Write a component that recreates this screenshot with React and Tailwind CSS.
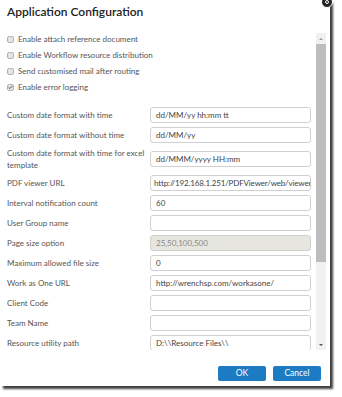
import { Check } from "lucide-react";

const checks = [
  { label: "Enable attach reference document", checked: false },
  { label: "Enable Workflow resource distribution", checked: false },
  { label: "Send customised mail after routing", checked: false },
  { label: "Enable error logging", checked: true },
];

const fields = [
  { label: "Custom date format with time", value: "dd/MM/yy hh:mm tt" },
  { label: "Custom date format without time", value: "dd/MM/yy" },
  { label: "Custom date format with time for excel template", value: "dd/MMM/yyyy HH:mm", tall: true },
  { label: "PDF viewer URL", value: "http://192.168.1.251/PDFViewer/web/viewer", tight: true },
  { label: "Interval notification count", value: "60" },
  { label: "User Group name", value: "" },
  { label: "Page size option", value: "25,50,100,500", disabled: true },
  { label: "Maximum allowed file size", value: "0" },
  { label: "Work as One URL", value: "http://wrenchsp.com/workasone/" },
  { label: "Client Code", value: "" },
  { label: "Team Name", value: "" },
  { label: "Resource utility path", value: "D:\\\\Resource Files\\\\" },
];

export default function App() {
  return (
    <div className="w-[342px] h-[397px] bg-white overflow-hidden relative font-['Lato',sans-serif]">
      {/* Dialog */}
      <div className="w-[330px] h-[386px] bg-white shadow-[3px_3px_2px_rgba(0,0,0,0.75)] flex flex-col">

        {/* Header */}
        <h1 className="pt-[2px] pl-[7px] text-[12px] leading-[20px] font-semibold text-[#222]">
          Application Configuration
        </h1>

        {/* Scrollable body */}
        <div className="mt-[9px] h-[319px] flex">
          <div className="w-[316px] overflow-hidden pl-[7px]">

            {/* Checkboxes */}
            <div className="flex flex-col">
              {checks.map((c) => (
                <div key={c.label} className="h-[16px] flex items-center gap-[4px]">
                  <div className="w-[7px] h-[7px] rounded-[2px] border border-[#b5b5b5] bg-[#e4e4e4] flex items-center justify-center">
                    {c.checked && <Check size={7} strokeWidth={4} className="text-[#333]" />}
                  </div>
                  <span className="text-[8px] text-[#555]">{c.label}</span>
                </div>
              ))}
            </div>

            {/* Form rows */}
            <div className="mt-[12px] flex flex-col gap-[4px]">
              {fields.map((f) => (
                <div key={f.label} className={`flex items-center ${f.tall ? "h-[24px]" : "h-[16px]"}`}>
                  <div className="w-[143px] pr-[2px] text-[8px] leading-[12px] text-[#555]">
                    {f.label}
                  </div>
                  <div
                    className={`w-[161px] h-[16px] border border-[#d0d0d0] rounded-[3px] flex items-center overflow-hidden whitespace-nowrap text-[8px] ${
                      f.tight ? "px-[3px] tracking-[-0.15px]" : "px-[5px]"
                    } ${f.disabled ? "bg-[#e6e6df] text-[#888]" : "bg-white text-[#444]"}`}
                  >
                    {f.value}
                  </div>
                </div>
              ))}
            </div>
          </div>

          {/* Scrollbar */}
          <div className="w-[10px] mt-[2px] h-[317px] bg-[#f1f1f1] flex flex-col">
            <div className="h-[11px] flex items-center justify-center">
              <div className="w-0 h-0 border-l-[2px] border-r-[2px] border-b-[2px] border-l-transparent border-r-transparent border-b-[#999]" />
            </div>
            <div className="h-[218px] bg-[#bdbdbd]" />
            <div className="flex-1" />
            <div className="h-[11px] flex items-center justify-center">
              <div className="w-0 h-0 border-l-[2px] border-r-[2px] border-t-[2px] border-l-transparent border-r-transparent border-t-[#555]" />
            </div>
          </div>
        </div>

        {/* Footer buttons */}
        <div className="mt-[16px] pr-[9px] flex justify-end gap-[7px]">
          <button className="w-[48px] h-[15px] rounded-[2px] bg-[#1c7bc2] text-white text-[8.5px] leading-[15px]">
            OK
          </button>
          <button className="w-[48px] h-[15px] rounded-[2px] bg-[#1c7bc2] text-white text-[8.5px] leading-[15px]">
            Cancel
          </button>
        </div>
      </div>

      {/* Close icon peeking at the corner */}
      <div className="absolute left-[321px] top-[-4px] w-[12px] h-[12px] rounded-full bg-[#222] border border-white flex items-center justify-center">
        <div className="w-[4px] h-[4px] rounded-full border border-white" />
      </div>
    </div>
  );
}
